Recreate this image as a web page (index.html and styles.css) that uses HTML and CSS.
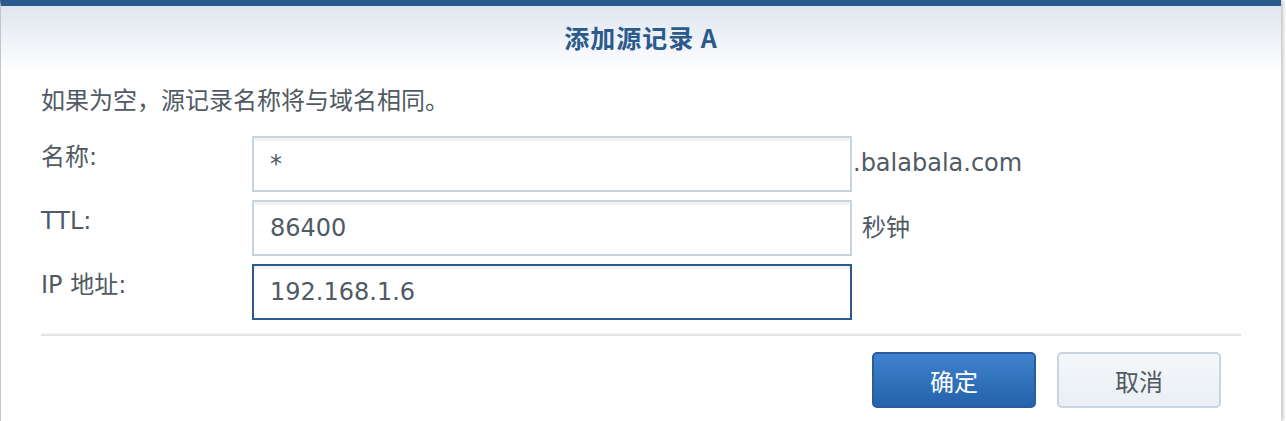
FILE: index.html
```html
<!DOCTYPE html>
<html lang="zh-CN">
<head>
    <meta charset="UTF-8">
    <title>添加源记录 A</title>
    <link rel="stylesheet" href="styles.css">
</head>
<body>
    <div class="dialog">
        <div class="dialog-head">
            <h1>添加源记录 A</h1>
        </div>
        <div class="dialog-body">
            <p class="hint">如果为空，源记录名称将与域名相同。</p>
            <div class="form">
                <label class="label">名称:</label>
                <input class="field" type="text" value="*">
                <span class="suffix">.balabala.com</span>

                <label class="label">TTL:</label>
                <input class="field" type="text" value="86400">
                <span class="suffix unit">秒钟</span>

                <label class="label">IP 地址:</label>
                <input class="field active" type="text" value="192.168.1.6">
                <span class="suffix"></span>
            </div>
            <div class="divider"></div>
        </div>
        <div class="dialog-foot">
            <button class="btn primary">确定</button>
            <button class="btn">取消</button>
        </div>
    </div>
</body>
</html>
```

FILE: styles.css
```css
body {
    margin: 0;
    padding: 0;
    width: 1286px;
    height: 421px;
    overflow: hidden;
    background-color: #fff;
    font-family: "DejaVu Sans", "Noto Sans CJK SC", sans-serif;
    font-size: 24px;
    color: #515a63;
}
.dialog {
    width: 1281px;
    height: 421px;
    border-left: 1px solid #c4c4c4;
    border-top: 6px solid #2b5a8d;
    background-color: #fff;
    box-shadow: 2px 0 4px rgba(0, 0, 0, 0.25);
    box-sizing: border-box;
}
.dialog-head {
    height: 66px;
    background: linear-gradient(#dfe6ef, #fff);
}
h1 {
    margin: 0;
    line-height: 62px;
    text-align: center;
    font-size: 25px;
    font-weight: bold;
    letter-spacing: 1px;
    color: #2b5a8d;
    font-family: "Noto Sans CJK SC", sans-serif;
}
.dialog-body {
    padding: 0 40px;
}
.hint {
    margin: 12px 0 22px;
    line-height: 30px;
    font-family: "Noto Sans CJK SC", sans-serif;
}
.form {
    display: grid;
    grid-template-columns: 211px 600px auto;
    row-gap: 8px;
}
.label {
    padding-top: 6px;
    line-height: 30px;
}
.field {
    height: 56px;
    box-sizing: border-box;
    border: 2px solid #c9d4df;
    box-shadow: inset 0 3px 0 #f1f3f5;
    padding: 0 16px;
    font-family: "DejaVu Sans", sans-serif;
    font-size: 24px;
    color: #515a63;
    outline: none;
}
.field.active {
    border-color: #2b5a8d;
}
.suffix {
    padding-left: 1px;
    padding-top: 12px;
    line-height: 30px;
}
.suffix.unit {
    padding-left: 10px;
    padding-top: 13px;
}
.divider {
    margin-top: 13px;
    height: 3px;
    background: linear-gradient(#f4f4f4, #dcdcdc);
}
.dialog-foot {
    display: flex;
    justify-content: flex-end;
    gap: 21px;
    padding: 16px 60px 0 0;
}
.btn {
    width: 164px;
    height: 56px;
    border: 2px solid #c9d4df;
    border-radius: 5px;
    background: linear-gradient(#f5f8fb, #e9eff5);
    font-family: "Noto Sans CJK SC", sans-serif;
    font-size: 24px;
    color: #515a63;
    cursor: pointer;
}
.btn.primary {
    border-color: #2a5c9c;
    background: linear-gradient(#3f82cd, #2562ad);
    color: #fff;
}
```
